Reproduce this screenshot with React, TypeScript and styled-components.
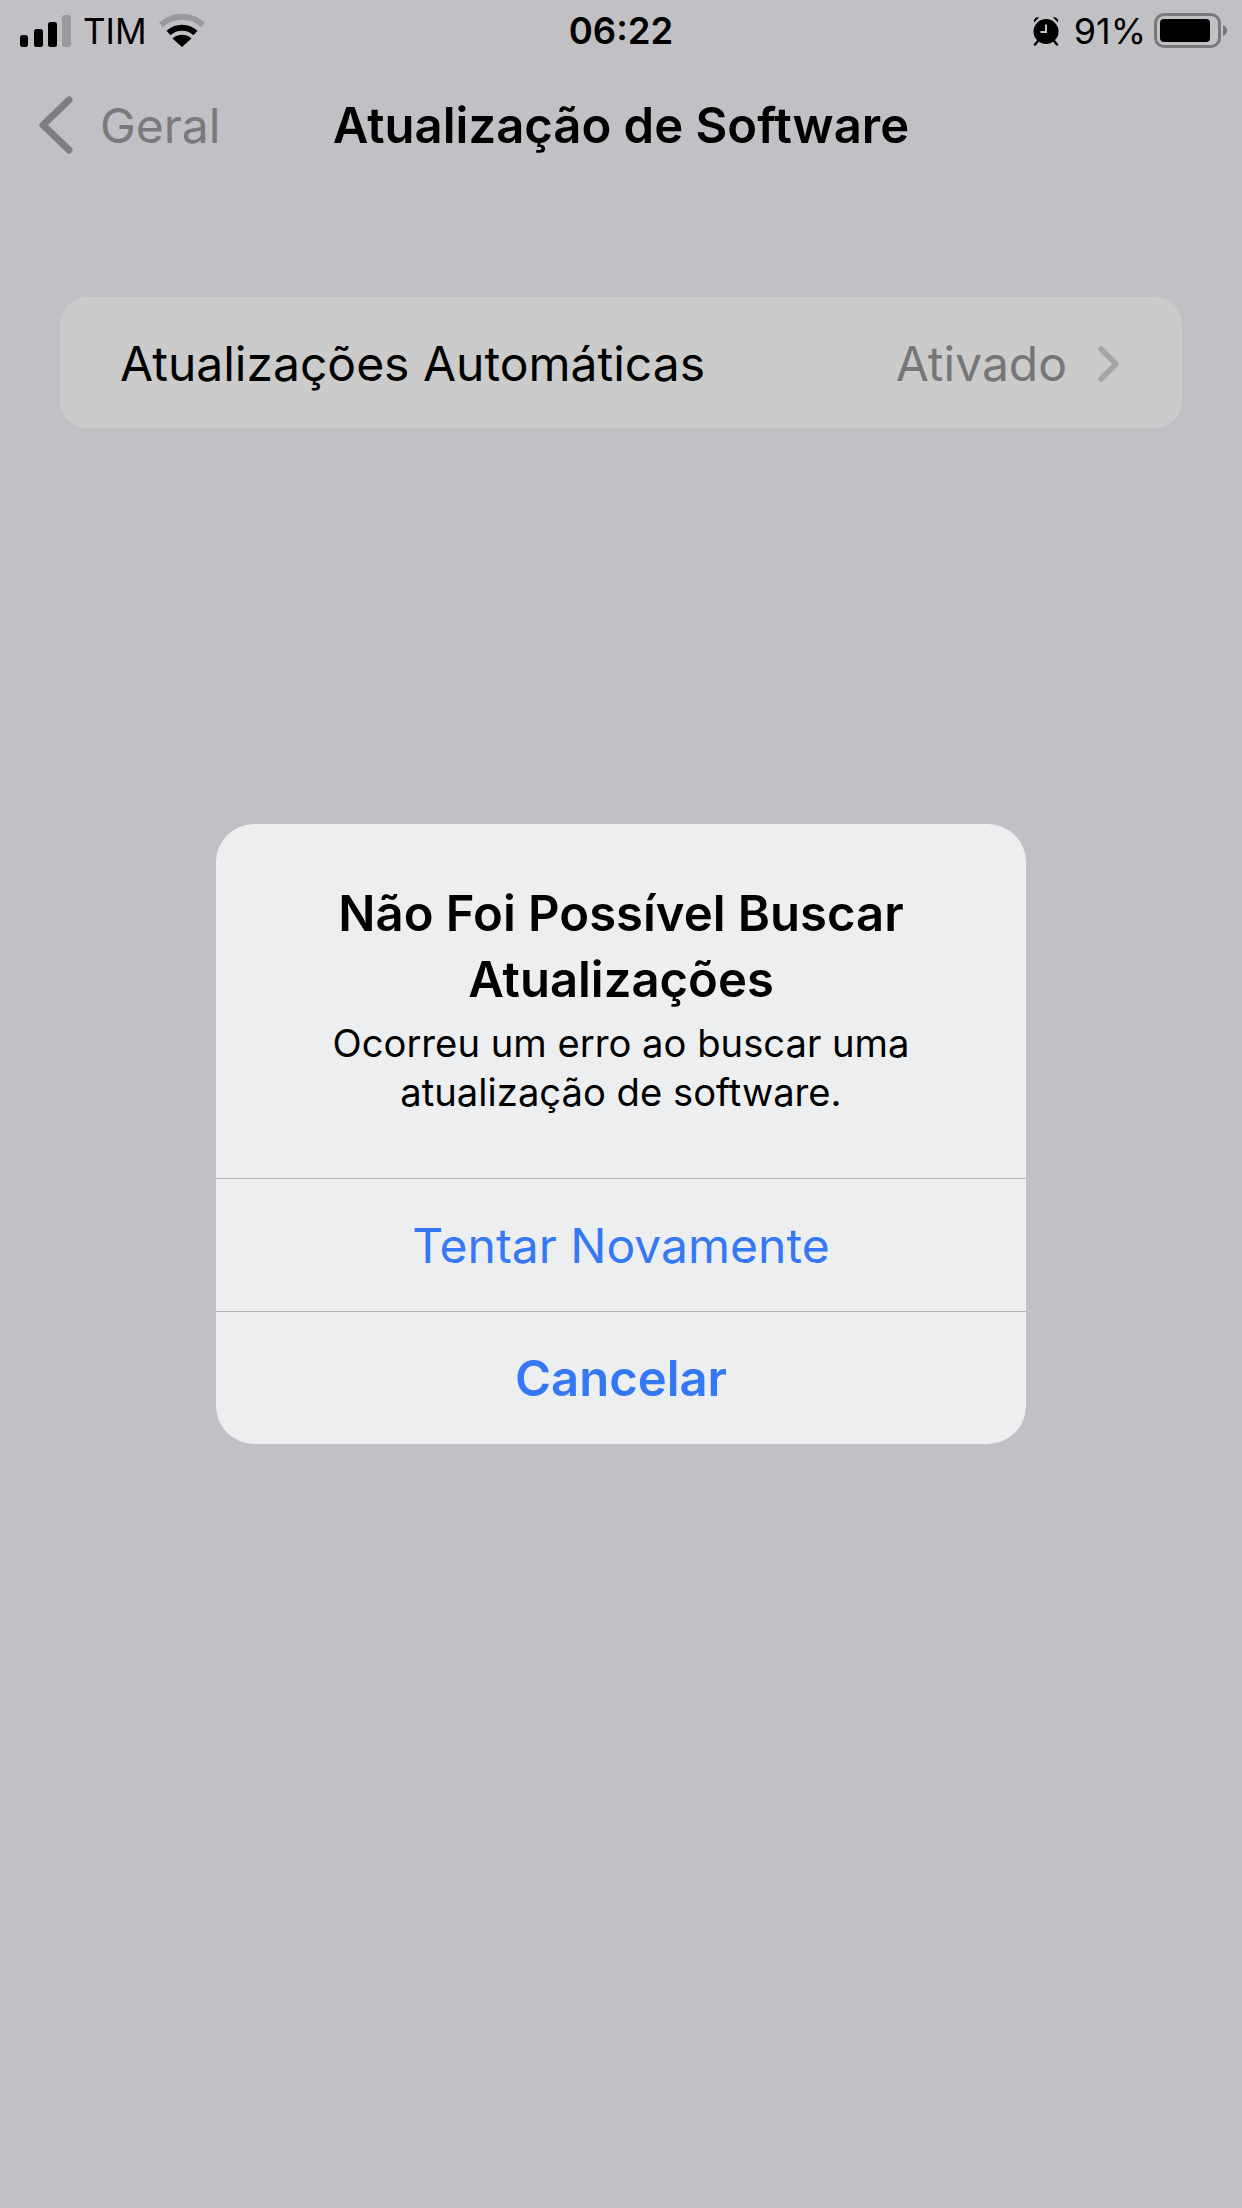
import React from "react";
import styled, { createGlobalStyle } from "styled-components";

const Global = createGlobalStyle`
  html, body { margin: 0; padding: 0; background: #c1c0c5; }
  body { font-family: Inter, "Liberation Sans", sans-serif; color: #000; }
  #root { width: 1242px; height: 2208px; overflow: hidden; }
`;

const Screen = styled.div`
  position: relative;
  width: 1242px;
  height: 2208px;
  background: #c1c0c5;
  overflow: hidden;
`;

const StatusBar = styled.div`
  display: grid;
  grid-template-columns: 1fr auto 1fr;
  align-items: center;
  height: 62px;
  padding: 0 14px 0 20px;
`;

const StatusLeft = styled.div`
  display: flex;
  align-items: center;
`;

const StatusRight = styled.div`
  display: flex;
  align-items: center;
  justify-content: flex-end;
`;

const Carrier = styled.span`
  font-size: 35px;
  font-weight: 400;
  margin: 0 12px 0 11px;
  line-height: 60px;
`;

const Clock = styled.span`
  font-size: 36.5px;
  font-weight: 600;
  line-height: 60px;
  margin-right: 6px;
`;

const Percent = styled.span`
  font-size: 36px;
  font-weight: 400;
  margin: 0 8px 0 14px;
  line-height: 60px;
`;

const NavBar = styled.div`
  position: relative;
  display: flex;
  align-items: center;
  height: 72px;
  margin-top: 27px;
  padding-left: 38px;
`;

const BackLabel = styled.span`
  font-size: 48px;
  color: #7a7a7c;
  margin-left: 26px;
`;

const NavTitle = styled.span`
  position: absolute;
  left: 0;
  right: 0;
  text-align: center;
  font-size: 49px;
  font-weight: 600;
`;

const Card = styled.div`
  display: flex;
  align-items: center;
  justify-content: space-between;
  box-sizing: border-box;
  height: 131px;
  margin: 136px 60px 0;
  padding: 2px 61px 0 60px;
  background: #cbcbcb;
  border-radius: 27px;
  font-size: 48px;
`;

const CardValue = styled.span`
  display: flex;
  align-items: center;
  gap: 30px;
  color: #767678;
`;

const Modal = styled.div`
  position: absolute;
  left: 216px;
  top: 824px;
  width: 810px;
  height: 620px;
  display: flex;
  flex-direction: column;
  background: #edeeef;
  border-radius: 38px;
  overflow: hidden;
`;

const ModalBody = styled.div`
  height: 354px;
  box-sizing: border-box;
  padding-top: 57px;
  text-align: center;
`;

const ModalTitle = styled.div`
  font-size: 49px;
  font-weight: 600;
  line-height: 66px;
`;

const ModalText = styled.div`
  font-size: 38.2px;
  line-height: 49px;
  margin-top: 6px;
`;

const ModalButton = styled.div<{ $bold?: boolean }>`
  flex: 1;
  display: flex;
  align-items: center;
  justify-content: center;
  border-top: 1px solid #b4b4b7;
  color: #3478f6;
  font-size: ${(p) => (p.$bold ? 49 : 48)}px;
  font-weight: ${(p) => (p.$bold ? 600 : 400)};
`;

const Signal = () => (
  <svg width="52" height="32" viewBox="0 0 52 32">
    <rect x="0" y="20" width="8" height="12" rx="2.5" fill="#000" />
    <rect x="14" y="14" width="9" height="18" rx="2.5" fill="#000" />
    <rect x="28" y="7" width="9" height="25" rx="2.5" fill="#000" />
    <rect x="42" y="0" width="9" height="32" rx="2.5" fill="#9a9a9c" />
  </svg>
);

const Wifi = () => (
  <svg width="46" height="34" viewBox="0 0 46 34">
    <path d="M2 11 A31 31 0 0 1 44 11" fill="none" stroke="#9a9a9c" strokeWidth="6" />
    <path d="M9.5 19 A20 20 0 0 1 36.5 19" fill="none" stroke="#000" strokeWidth="6" />
    <path d="M23 33 L13.5 24.5 A14 14 0 0 1 32.5 24.5 Z" fill="#000" />
  </svg>
);

const Alarm = () => (
  <svg width="28" height="30" viewBox="0 0 28 30">
    <circle cx="14" cy="15.5" r="12.5" fill="#000" />
    <path d="M14 8.5 V16 H8.5" fill="none" stroke="#c1c0c5" strokeWidth="2" />
    <path d="M2 6.5 A4 4 0 0 1 7 1.5 Z M26 6.5 A4 4 0 0 0 21 1.5 Z" fill="#000" />
    <path d="M6 25 L3 28.5 M22 25 L25 28.5" stroke="#000" strokeWidth="2.5" strokeLinecap="round" />
  </svg>
);

const Battery = () => (
  <svg width="74" height="36" viewBox="0 0 74 36">
    <rect x="1.5" y="1.5" width="64" height="32" rx="8.5" fill="none" stroke="#79797b" strokeWidth="3" />
    <rect x="6" y="6" width="50" height="23" rx="4" fill="#000" />
    <path d="M69 12 C72 13 73 15 73 17.5 C73 20 72 22 69 23 Z" fill="#79797b" />
  </svg>
);

const BackChevron = () => (
  <svg width="36" height="58" viewBox="0 0 36 58">
    <path d="M31 4 L5 29 L31 54" fill="none" stroke="#7e7e80" strokeWidth="7" strokeLinecap="round" strokeLinejoin="round" />
  </svg>
);

const RowChevron = () => (
  <svg width="24" height="38" viewBox="0 0 24 38">
    <path d="M4 4 L19 19 L4 34" fill="none" stroke="#a5a5a7" strokeWidth="5.5" strokeLinecap="round" strokeLinejoin="round" />
  </svg>
);

export default function App() {
  return (
    <Screen>
      <Global />
      <StatusBar>
        <StatusLeft>
          <Signal />
          <Carrier>TIM</Carrier>
          <Wifi />
        </StatusLeft>
        <Clock>06:22</Clock>
        <StatusRight>
          <Alarm />
          <Percent>91%</Percent>
          <Battery />
        </StatusRight>
      </StatusBar>
      <NavBar>
        <BackChevron />
        <BackLabel>Geral</BackLabel>
        <NavTitle>Atualização de Software</NavTitle>
      </NavBar>
      <Card>
        <span>Atualizações Automáticas</span>
        <CardValue>
          Ativado
          <RowChevron />
        </CardValue>
      </Card>
      <Modal>
        <ModalBody>
          <ModalTitle>
            Não Foi Possível Buscar
            <br />
            Atualizações
          </ModalTitle>
          <ModalText>
            Ocorreu um erro ao buscar uma
            <br />
            atualização de software.
          </ModalText>
        </ModalBody>
        <ModalButton>Tentar Novamente</ModalButton>
        <ModalButton $bold>Cancelar</ModalButton>
      </Modal>
    </Screen>
  );
}
